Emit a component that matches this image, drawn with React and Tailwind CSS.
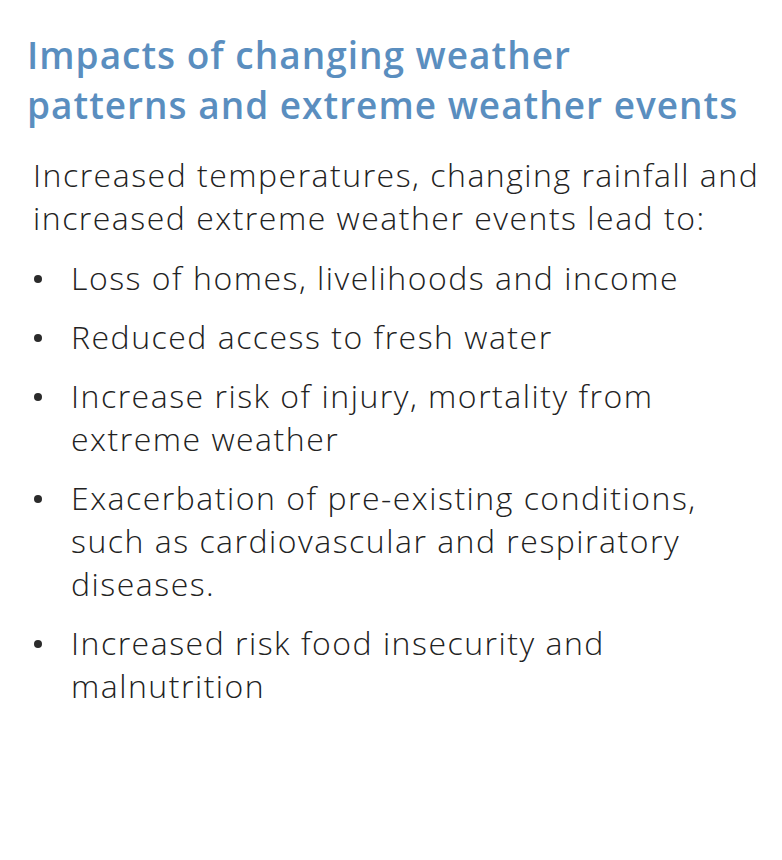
const items = [
  ["Loss of homes, livelihoods and income"],
  ["Reduced access to fresh water"],
  ["Increase risk of injury, mortality from", "extreme weather"],
  ["Exacerbation of pre-existing conditions,", "such as cardiovascular and respiratory", "diseases."],
  ["Increased risk food insecurity and", "malnutrition"],
];

const App = () => {
  return (
    <div className="w-[782px] h-[860px] bg-white pt-[30px] pl-[27px] font-['Open_Sans',sans-serif]">
      <h1 className="text-[37px] leading-[50px] font-semibold tracking-[1px] text-[#5a8ebf] whitespace-nowrap">
        Impacts of changing weather
        <br />
        patterns and extreme weather events
      </h1>

      <p className="mt-[23px] pl-[6px] text-[32px] leading-[43px] font-light tracking-[1.5px] text-[#222222] whitespace-nowrap">
        Increased temperatures, changing rainfall and
        <br />
        increased extreme weather events lead to:
      </p>

      <ul className="mt-[17px] flex flex-col gap-[16px]">
        {items.map((lines, i) => (
          <li key={i} className="flex">
            <div className="w-[44px] h-[43px] flex items-center">
              <span className="block w-[8px] h-[8px] rounded-full bg-[#2b2b2b] mt-[2px] ml-[7px]" />
            </div>
            <div className="text-[32px] leading-[43px] font-light tracking-[1.5px] text-[#222222] whitespace-nowrap">
              {lines.map((l, j) => (
                <div key={j}>{l}</div>
              ))}
            </div>
          </li>
        ))}
      </ul>
    </div>
  );
};

export default App;
